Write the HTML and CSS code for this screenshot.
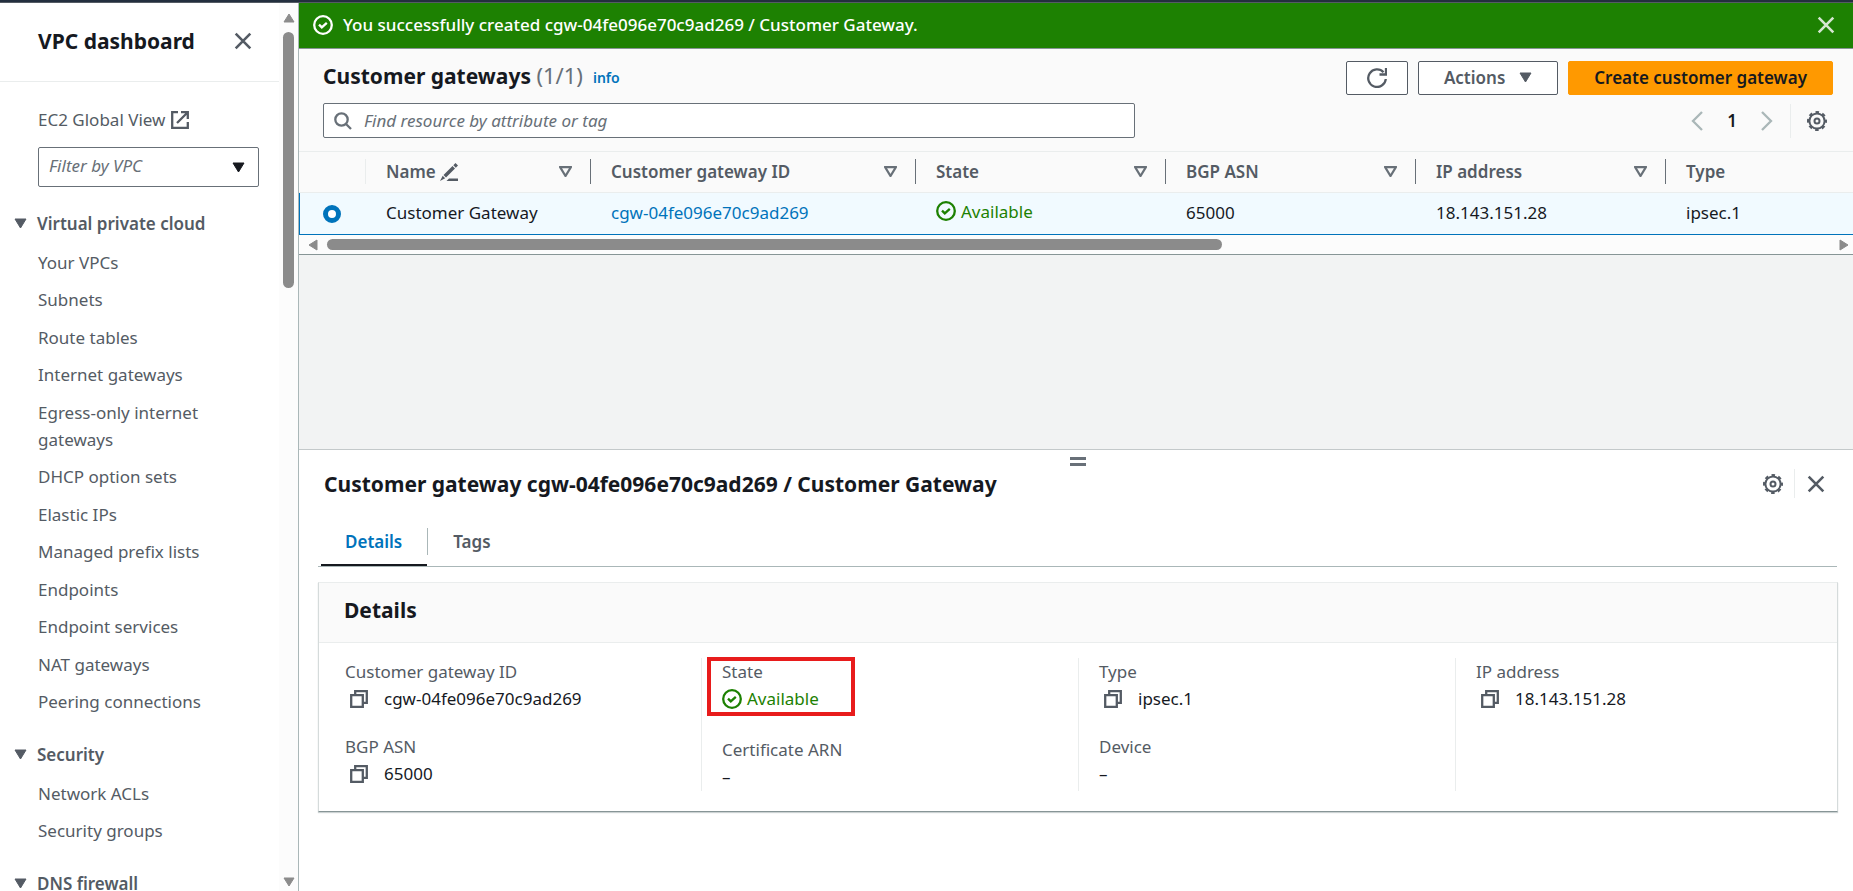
FILE: index.html
```html
<!DOCTYPE html>
<html lang="en">
<head>
  <meta charset="UTF-8">
  <meta name="viewport" content="width=device-width, initial-scale=1.0">
  <title>Customer gateways | VPC Console</title>
  <link rel="stylesheet" href="styles.css">
</head>
<body>
  <!-- Shared icons -->
  <svg class="sprite" aria-hidden="true">
    <symbol id="close" viewBox="0 0 16 16"><path d="M1.5 1.5l13 13M14.5 1.5l-13 13"/></symbol>
    <symbol id="check" viewBox="0 0 20 20"><circle cx="10" cy="10" r="8.8"/><path d="M6 9.600l2.800 2.800 5-4.600"/></symbol>
    <symbol id="copy" viewBox="0 0 18 18"><path d="M1.200 5.200h11.600v11.600H1.200zM5.200 5V1.200h11.600v11.600H13"/></symbol>
    <symbol id="gear" viewBox="0 0 20 20">
      <circle cx="10" cy="10" r="7.600"/>
      <circle cx="10" cy="10" r="9" stroke-dasharray="3.600 3.469" stroke-dashoffset="1.800"/>
      <circle cx="10" cy="10" r="2.500"/>
    </symbol>
    <symbol id="down" viewBox="0 0 13 11"><path d="M1 1h11L6.500 10z"/></symbol>
  </svg>

  <div class="topbar"></div>
  <div class="layout">
    <!-- Side navigation -->
    <aside class="sidebar">
      <div class="sidebar-content">
        <div class="sidebar-header">
          <h2>VPC dashboard</h2>
          <button class="icon-btn" aria-label="Close navigation"><svg class="icon-close"><use href="#close"/></svg></button>
        </div>
        <nav>
          <a class="global-link" href="#">EC2 Global View
            <svg class="icon-external" viewBox="0 0 18 18"><path d="M7 1.200H1.200v15.600h15.600V11M10 1.200h6.800V8M16.500 1.500L6 12"/></svg>
          </a>
          <div class="vpc-filter">
            <select aria-label="Filter by VPC"><option>Filter by VPC</option></select>
            <svg class="icon-down"><use href="#down"/></svg>
          </div>
          <h3><svg class="icon-down"><use href="#down"/></svg>Virtual private cloud</h3>
          <ul>
            <li><a href="#">Your VPCs</a></li>
            <li><a href="#">Subnets</a></li>
            <li><a href="#">Route tables</a></li>
            <li><a href="#">Internet gateways</a></li>
            <li><a href="#">Egress-only internet gateways</a></li>
            <li><a href="#">DHCP option sets</a></li>
            <li><a href="#">Elastic IPs</a></li>
            <li><a href="#">Managed prefix lists</a></li>
            <li><a href="#">Endpoints</a></li>
            <li><a href="#">Endpoint services</a></li>
            <li><a href="#">NAT gateways</a></li>
            <li><a href="#">Peering connections</a></li>
          </ul>
          <h3><svg class="icon-down"><use href="#down"/></svg>Security</h3>
          <ul>
            <li><a href="#">Network ACLs</a></li>
            <li><a href="#">Security groups</a></li>
          </ul>
          <h3><svg class="icon-down"><use href="#down"/></svg>DNS firewall</h3>
        </nav>
      </div>
      <div class="scroll-y">
        <svg viewBox="0 0 12 10"><path d="M6 1l5 8H1z"/></svg>
        <div class="track"><div class="thumb"></div></div>
        <svg viewBox="0 0 12 10"><path d="M1 1h10L6 9z"/></svg>
      </div>
    </aside>

    <main>
      <div class="flash">
        <svg class="icon-check"><use href="#check"/></svg>
        <p>You successfully created cgw-04fe096e70c9ad269 / Customer Gateway.</p>
        <button class="icon-btn" aria-label="Dismiss"><svg class="icon-close"><use href="#close"/></svg></button>
      </div>

      <!-- Gateway list -->
      <section class="list">
        <div class="list-header">
          <h1>Customer gateways <span class="count">(1/1)</span></h1>
          <a class="info" href="#">info</a>
          <div class="actions">
            <button class="btn btn-refresh" aria-label="Refresh">
              <svg class="icon-refresh" viewBox="0 0 20 20"><path d="M18.800 11A8.800 8.800 0 1 1 16.500 4.200M19 0v6.500h-6.500"/></svg>
            </button>
            <button class="btn btn-actions">Actions <svg class="icon-down"><use href="#down"/></svg></button>
            <button class="btn btn-primary">Create customer gateway</button>
          </div>
        </div>
        <div class="list-tools">
          <div class="search">
            <svg class="icon-search" viewBox="0 0 18 18"><circle cx="7.500" cy="7.500" r="6.200"/><path d="M12 12l5 5"/></svg>
            <input type="text" placeholder="Find resource by attribute or tag" aria-label="Find resource by attribute or tag">
          </div>
          <div class="pager">
            <button class="icon-btn" aria-label="Previous page"><svg class="icon-chevron" viewBox="0 0 12 20"><path d="M11 1L2 10l9 9"/></svg></button>
            <span class="page">1</span>
            <button class="icon-btn" aria-label="Next page"><svg class="icon-chevron" viewBox="0 0 12 20"><path d="M1 1l9 9-9 9"/></svg></button>
          </div>
          <button class="icon-btn preferences" aria-label="Preferences"><svg class="icon-gear"><use href="#gear"/></svg></button>
        </div>

        <div class="table-wrap">
          <table>
            <colgroup>
              <col class="col-radio"><col class="col-name"><col class="col-id"><col class="col-std"><col class="col-std"><col class="col-std"><col>
            </colgroup>
            <thead>
              <tr>
                <th class="th-radio"><div></div></th>
                <th><div>Name <svg class="icon-edit" viewBox="0 0 18 18"><path class="pen" d="M15.500 0L18 2.500 15.800 4.700 13.300 2.200zM12.500 3L15 5.500 6 14.500 3.500 12z"/><path class="pen" d="M2.700 12.800l2.500 2.500L0 18z"/><path class="pen" d="M9 15.500h9V18H6.500z"/></svg><svg class="icon-sort"><use href="#down"/></svg></div></th>
                <th><div>Customer gateway ID<svg class="icon-sort"><use href="#down"/></svg></div></th>
                <th><div>State<svg class="icon-sort"><use href="#down"/></svg></div></th>
                <th><div>BGP ASN<svg class="icon-sort"><use href="#down"/></svg></div></th>
                <th><div>IP address<svg class="icon-sort"><use href="#down"/></svg></div></th>
                <th class="th-last"><div>Type</div></th>
              </tr>
            </thead>
            <tbody>
              <tr>
                <td class="td-radio"><input type="radio" name="gateway" aria-label="Select Customer Gateway" checked></td>
                <td>Customer Gateway</td>
                <td><a href="#">cgw-04fe096e70c9ad269</a></td>
                <td><span class="status"><svg class="icon-check"><use href="#check"/></svg>Available</span></td>
                <td>65000</td>
                <td>18.143.151.28</td>
                <td>ipsec.1</td>
              </tr>
            </tbody>
          </table>
        </div>
        <div class="scroll-x">
          <svg viewBox="0 0 10 12"><path d="M9 1v10L1 6z"/></svg>
          <div class="track"><div class="thumb"></div></div>
          <svg viewBox="0 0 10 12"><path d="M1 1v10l8-5z"/></svg>
        </div>
      </section>

      <!-- Split panel -->
      <section class="panel">
        <div class="handle"></div>
        <div class="panel-header">
          <h2>Customer gateway cgw-04fe096e70c9ad269 / Customer Gateway</h2>
          <button class="icon-btn" aria-label="Panel preferences"><svg class="icon-gear"><use href="#gear"/></svg></button>
          <button class="icon-btn panel-close" aria-label="Close panel"><svg class="icon-close"><use href="#close"/></svg></button>
        </div>
        <div class="tabs" role="tablist">
          <button class="tab active" role="tab" aria-selected="true">Details</button>
          <button class="tab" role="tab" aria-selected="false">Tags</button>
        </div>

        <div class="card">
          <h2>Details</h2>
          <div class="details">
            <dl>
              <dt>Customer gateway ID</dt>
              <dd><button class="copy" aria-label="Copy gateway ID"><svg><use href="#copy"/></svg></button>cgw-04fe096e70c9ad269</dd>
              <dt>BGP ASN</dt>
              <dd><button class="copy" aria-label="Copy BGP ASN"><svg><use href="#copy"/></svg></button>65000</dd>
            </dl>
            <dl class="state">
              <dt>State</dt>
              <dd><span class="status"><svg class="icon-check"><use href="#check"/></svg>Available</span></dd>
              <dt>Certificate ARN</dt>
              <dd>–</dd>
            </dl>
            <dl>
              <dt>Type</dt>
              <dd><button class="copy" aria-label="Copy type"><svg><use href="#copy"/></svg></button>ipsec.1</dd>
              <dt>Device</dt>
              <dd>–</dd>
            </dl>
            <dl>
              <dt>IP address</dt>
              <dd><button class="copy" aria-label="Copy IP address"><svg><use href="#copy"/></svg></button>18.143.151.28</dd>
            </dl>
          </div>
        </div>
      </section>
    </main>
  </div>
</body>
</html>
```

FILE: styles.css
```css
*, *::before, *::after {
  box-sizing: border-box;
}

body {
  margin: 0;
  height: 100vh;
  display: flex;
  flex-direction: column;
  overflow: hidden;
  font: 17px/27px "Noto Sans", "Open Sans", sans-serif;
  color: #16191f;
  background: #fff;
}

h1, h2, h3, p, ul, dl, dd {
  margin: 0;
  padding: 0;
}

h1, h2 {
  font-size: 21px;
  line-height: 28px;
  font-weight: 700;
}

a {
  color: #0073bb;
  text-decoration: none;
}

button, input, select {
  font: inherit;
  color: inherit;
}

svg {
  flex: none;
  fill: none;
  stroke: currentColor;
  stroke-width: 2.3;
}

.sprite {
  position: absolute;
  width: 0;
  height: 0;
}

.icon-close {
  width: 18px;
  height: 18px;
}

.icon-check, .icon-gear, .icon-refresh {
  width: 20px;
  height: 20px;
}

.icon-gear {
  stroke-width: 2;
}

.icon-external {
  width: 18px;
  height: 18px;
}

.icon-search {
  width: 18px;
  height: 18px;
  color: #687078;
}

.icon-down {
  width: 13px;
  height: 11px;
  fill: currentColor;
  stroke-width: 1;
  stroke-linejoin: round;
}

.icon-sort {
  width: 13px;
  height: 11px;
  margin-left: auto;
  color: #687078;
  stroke-linejoin: round;
}

.icon-edit {
  width: 18px;
  height: 18px;
}

.pen {
  fill: currentColor;
  stroke: none;
}

.icon-chevron {
  width: 12px;
  height: 20px;
  color: #aab7b8;
}

.icon-btn {
  display: flex;
  padding: 0;
  border: 0;
  background: none;
  color: #545b64;
  cursor: pointer;
}

.topbar {
  flex: none;
  height: 3px;
  background: #232f3e;
  border-bottom: 1px solid #545b64;
}

.layout {
  flex: 1;
  min-height: 0;
  display: flex;
}

/* Sidebar */
.sidebar {
  flex: none;
  width: 299px;
  display: flex;
  border-right: 1px solid #aab7b8;
  color: #545b64;
}

.sidebar-content {
  flex: 1;
  overflow-y: auto;
  scrollbar-width: none;
}

.sidebar-header {
  display: flex;
  align-items: center;
  justify-content: space-between;
  height: 79px;
  padding: 0 27px 2px 38px;
  border-bottom: 1px solid #eaeded;
}

.sidebar-header h2 {
  color: #16191f;
}

nav {
  padding: 24px 20px 0 38px;
}

nav a {
  color: #545b64;
}

.global-link {
  display: flex;
  align-items: center;
  gap: 6px;
}

.vpc-filter {
  display: flex;
  align-items: center;
  position: relative;
  margin: 14px 0 23px;
}

.vpc-filter select {
  width: 100%;
  height: 40px;
  padding: 0 10px 3px;
  appearance: none;
  border: 1px solid #687078;
  border-radius: 2px;
  background: #fff;
  font-style: italic;
  color: #687078;
}

.vpc-filter .icon-down {
  position: absolute;
  right: 14px;
  color: #16191f;
  pointer-events: none;
}

nav h3 {
  display: flex;
  align-items: center;
  gap: 10px;
  margin-left: -24px;
  font-size: 17px;
  font-weight: 600;
}

nav ul {
  list-style: none;
  padding: 12px 0 15px;
}

nav li {
  margin-bottom: 10px;
}

nav li:nth-child(even) {
  margin-bottom: 11px;
}

/* Scrollbars */
.scroll-y, .scroll-x {
  display: flex;
  flex: none;
  align-items: center;
  background: #fcfcfc;
}

.scroll-y {
  flex-direction: column;
  width: 19px;
  padding: 10px 0 4px;
}

.scroll-x {
  height: 19px;
  padding: 0 4px 0 9px;
}

.scroll-y svg, .scroll-x svg {
  width: 12px;
  height: 10px;
  color: #8b8b8b;
  fill: currentColor;
  stroke-width: 1;
}

.scroll-x svg {
  width: 10px;
  height: 12px;
}

.track {
  flex: 1;
  padding: 9px 0;
}

.scroll-x .track {
  padding: 0 9px;
}

.thumb {
  background: #8b8b8b;
  border-radius: 6px;
}

.scroll-y .thumb {
  width: 11px;
  height: 256px;
}

.scroll-x .thumb {
  width: 895px;
  height: 11px;
}

/* Main column */
main {
  flex: 1;
  min-width: 0;
  display: flex;
  flex-direction: column;
  background: #f2f3f3;
}

.flash {
  display: flex;
  align-items: center;
  gap: 10px;
  height: 46px;
  padding: 0 18px 2px 14px;
  background: #1d8102;
  border-bottom: 1px solid #879596;
  color: #fff;
  font-weight: 500;
}

.flash .icon-btn {
  margin-left: auto;
  color: #d5e6d1;
}

.list {
  background: #fafafa;
  border-bottom: 1px solid #879596;
}

.list-header {
  display: flex;
  align-items: flex-start;
  gap: 10px;
  padding: 12px 20px 8px 24px;
}

.count {
  font-size: 22px;
  font-weight: 400;
  color: #687078;
}

.info {
  padding-top: 3px;
  font-size: 14px;
  font-weight: 600;
}

.actions {
  display: flex;
  gap: 10px;
  margin-left: auto;
}

.btn {
  display: flex;
  align-items: center;
  justify-content: center;
  gap: 14px;
  height: 34px;
  padding: 0 25px 2px;
  border: 1px solid #545b64;
  border-radius: 2px;
  background: #fff;
  color: #545b64;
  font-weight: 600;
}

.btn-refresh {
  padding: 0 20px;
}

.btn-primary {
  border-color: #f90;
  background: #f90;
  color: #16191f;
}

.list-tools {
  display: flex;
  align-items: center;
  height: 35px;
  margin: 0 26px 13px 24px;
}

.search {
  display: flex;
  align-items: center;
  gap: 12px;
  width: 54%;
  height: 35px;
  padding: 0 10px;
  border: 1px solid #687078;
  border-radius: 2px;
  background: #fff;
}

.search input {
  flex: 1;
  padding: 0;
  border: 0;
  outline: 0;
  background: none;
}

.search input::placeholder {
  font-style: italic;
  color: #687078;
}

.pager {
  display: flex;
  align-items: center;
  gap: 24px;
  margin-left: auto;
}

.page {
  font-weight: 600;
}

.preferences {
  align-items: center;
  height: 34px;
  margin-left: 17px;
  padding-left: 16px;
  border-left: 1px solid #eaeded;
}

/* Table */
.table-wrap {
  overflow: hidden;
  border-top: 1px solid #eaeded;
}

table {
  width: 100%;
  table-layout: fixed;
  border-collapse: separate;
  border-spacing: 0;
}

.col-radio { width: 67px; }
.col-name { width: 225px; }
.col-id { width: 325px; }
.col-std { width: 250px; }

th {
  padding: 7px 0 8px;
  border-bottom: 1px solid #eaeded;
  color: #545b64;
  font-weight: 600;
  text-align: left;
}

th div {
  display: flex;
  align-items: center;
  gap: 4px;
  height: 25px;
  padding: 0 18px 0 20px;
  border-right: 1px solid #687078;
}

.th-radio div {
  border-color: #eaeded;
}

.th-last div {
  border: 0;
}

td {
  height: 42px;
  padding: 0 20px 2px;
  background: #f1faff;
  border-bottom: 1px solid #0073bb;
}

.td-radio {
  padding: 0 23px;
  border-left: 1px solid #0073bb;
}

.td-radio input {
  display: block;
  width: 18px;
  height: 18px;
  margin: 0;
  appearance: none;
  border: 5px solid #0073bb;
  border-radius: 50%;
  background: #fff;
}

.status {
  display: flex;
  align-items: center;
  gap: 5px;
  color: #1d8102;
}

td .status {
  padding-bottom: 3px;
}

/* Split panel */
.panel {
  flex: none;
  min-height: 442px;
  margin-top: auto;
  padding: 7px 15px 0 19px;
  background: #fff;
  border-top: 1px solid #c4c9ca;
}

.handle {
  width: 16px;
  height: 9px;
  margin: 0 auto;
  border: solid #687078;
  border-width: 3px 0;
}

.panel-header {
  display: flex;
  align-items: center;
  margin: 3px 13px 30px 6px;
}

.panel-header h2 {
  margin-right: auto;
}

.panel-close {
  align-items: center;
  height: 29px;
  margin-left: 11px;
  padding-left: 12px;
  border-left: 1px solid #eaeded;
}

.tabs {
  display: flex;
  align-items: flex-start;
  height: 39px;
  margin-right: 1px;
  padding-left: 2px;
  border-bottom: 1px solid #aab7b8;
}

.tab {
  height: 27px;
  padding: 0 25px 1px;
  border: 0;
  background: none;
  color: #545b64;
  font-weight: 600;
}

.tab.active {
  position: relative;
  border-right: 1px solid #aab7b8;
  color: #0073bb;
}

.tab.active::after {
  content: "";
  position: absolute;
  left: 1px;
  right: 0;
  bottom: -11px;
  height: 2px;
  background: #16191f;
}

.card {
  margin-top: 15px;
  border: 1px solid #d5dbdb;
  border-top-color: #eaeded;
  border-bottom-color: #879596;
  box-shadow: 0 1px 1px rgba(0, 28, 36, 0.2);
}

.card h2 {
  padding: 13px 25px 18px;
  background: #fafafa;
  border-bottom: 1px solid #eaeded;
}

.details {
  display: grid;
  grid-template-columns: repeat(4, 1fr);
  padding: 15px 4px 20px 6px;
}

dl {
  padding: 0 20px 1px;
  border-right: 1px solid #eaeded;
}

dl:last-child {
  border: 0;
}

dt {
  color: #545b64;
}

dd {
  display: flex;
  align-items: center;
}

dd:not(:last-child) {
  margin-bottom: 21px;
}

/* Red frame around the state value */
.state {
  position: relative;
}

.state dd:not(:last-child) {
  margin-bottom: 24px;
}

.state::before {
  content: "";
  position: absolute;
  top: -1px;
  left: 5px;
  width: 148px;
  height: 59px;
  border: 4px solid #e81c1c;
}

.copy {
  display: flex;
  padding: 0 16px 0 5px;
  border: 0;
  background: none;
  color: #545b64;
}

.copy svg {
  width: 18px;
  height: 18px;
}
```
